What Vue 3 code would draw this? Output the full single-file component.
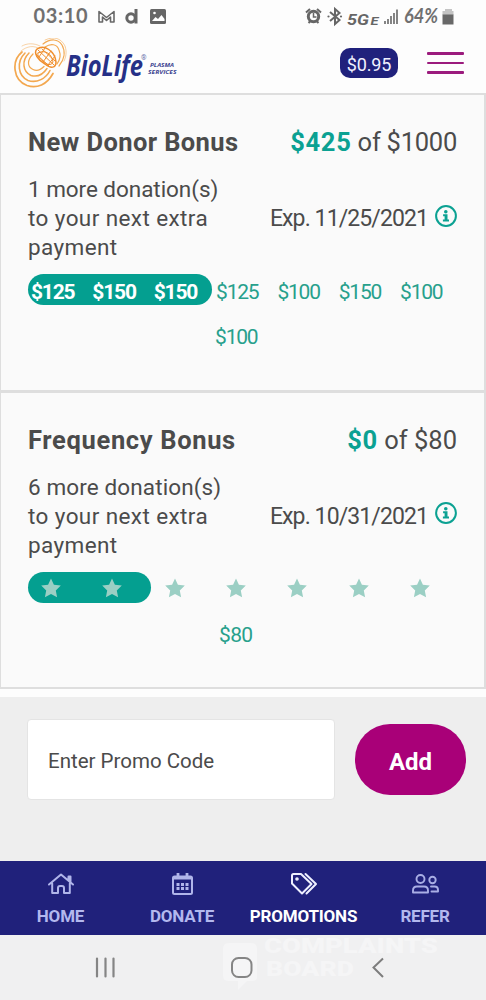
<script setup>
const bonuses = [
  {
    title: 'New Donor Bonus', cls: 'donor', earned: '$425', total: ' of $1000',
    lines: ['1 more donation(s)', 'to your next extra', 'payment'],
    exp: 'Exp. 11/25/2021', done: 3,
    steps: ['$125', '$150', '$150', '$125', '$100', '$150', '$100', '$100'],
  },
  {
    title: 'Frequency Bonus', cls: 'freq', earned: '$0', total: ' of $80',
    lines: ['6 more donation(s)', 'to your next extra', 'payment'],
    exp: 'Exp. 10/31/2021', done: 2,
    steps: ['', '', '', '', '', '', '', '$80'],
  },
]
</script>

<template>
  <div class="screen">
    <div class="status">
      <svg width="486" height="32" viewBox="0 0 486 32">
        <text class="clock" x="33.500" y="23" font-size="20" textLength="54">03:10</text>
        <text class="percent" x="404" y="23" font-size="20" textLength="34" lengthAdjust="spacingAndGlyphs">64%</text>
        <path d="M99 22V11.500l7.500 6 7.500-6V22h-3.500v-5l-4 3.500-4-3.500v5z" fill="none" stroke="#686868" stroke-width="1.600" stroke-linejoin="round" />
        <g fill="none" stroke="#666" stroke-width="3"><circle cx="131" cy="18" r="4.200" /><path d="M136 9v14.500" /></g>
        <rect x="150" y="9" width="16" height="15" rx="1.500" fill="#666" />
        <path d="M152 21l3.500-4 2.500 2 3.500-4 3 4v2z" fill="#fff" /><circle cx="154.500" cy="13" r="1.300" fill="#fff" />
        <g fill="none" stroke="#666">
          <circle cx="313.500" cy="16.500" r="5.200" stroke-width="3" />
          <path d="M306 12.500l4-3.500M321 12.500l-4-3.500M308.500 23l2-2M318.500 23l-2-2" stroke-width="2" />
          <path d="M313.500 13v4h3" stroke-width="1.500" />
          <path d="M330 12l9.500 8-4.500 4V9l4.500 4-9.500 8" stroke-width="2" />
        </g>
        <circle cx="328.500" cy="16.500" r="1.100" fill="#666" /><circle cx="341" cy="16.500" r="1.100" fill="#666" />
        <text class="net" x="347" y="25" font-size="15.500" textLength="22" lengthAdjust="spacingAndGlyphs">5G</text>
        <text class="net" x="370.500" y="25" font-size="10" textLength="8" lengthAdjust="spacingAndGlyphs">E</text>
        <path d="M385 24v-3M388 24v-5M391 24v-8M394 24V13M397 24V9.500" stroke="#707070" stroke-width="1.700" />
        <path d="M445 9h7v2h1.500v4h-11v-4h2.500z" fill="#c4c4c4" /><path d="M442.500 14.500h11v10h-11z" fill="#686868" />
      </svg>
    </div>

    <header class="header">
      <svg class="logo" width="165" height="52" viewBox="0 0 165 52">
        <g fill="none" stroke="#f3a850" stroke-linecap="round">
          <path d="M8 14C-3 23-1 42 13 47.500c10 3.500 20-1 26-12" stroke-width="1.700" />
          <path d="M11 15C2 24 4 38 14 42.500c9 3 18-2 22-10" stroke-width="1.600" />
          <path d="M15 15C7 23 9 34 17 37.500c7 2 12-1 16-7" stroke-width="1.500" />
          <path d="M19 16c-6 6-6 13 0 15.500 4 2 8 0 11-3" stroke-width="1.200" />
          <path d="M8 8c5-3 12-3 18 0M7 13c6-5 13-6 19-2" stroke-width="1" opacity=".5" />
          <path d="M29 6c8-6 15-5 19 1 4 7 2 15-3 21" stroke-width="1.200" />
          <path d="M31 9c6-4 12-3 14 3 2 5 1 10-2 14" stroke-width="1.200" />
          <path d="M31 2c9-4 16-2 20 6 2 6 1 11-1 15" stroke-width=".8" opacity=".7" />
          <path d="M23 11c7-5 18 2 19 13 0 6-5 7-11 2-7-4-12-11-8-15z" stroke-width="1.500" stroke="#f08f2e" />
          <path d="M24 15c7-4 14 1 15 9-2 4-6 3-10-1-4-3-6-6-5-8zM24 12l16 15M31 10l-6 9M37 13l-8 11M41 18l-7 9M28 11l13 12M22 16l13 12" stroke-width="1" stroke="#f08f2e" />
        </g>
        <text x="52" y="38" class="brand" font-size="28.500" textLength="77" lengthAdjust="spacingAndGlyphs">BioLife</text>
        <text x="127" y="22" class="reg" font-size="7">®</text>
        <text x="136" y="29.200" class="sub" font-size="6" textLength="24" lengthAdjust="spacingAndGlyphs">PLASMA</text>
        <text x="134" y="35.500" class="sub" font-size="6" textLength="28.500" lengthAdjust="spacingAndGlyphs">SERVICES</text>
      </svg>
      <div class="balance">$0.95</div>
      <div class="menu"><i></i><i></i><i></i></div>
    </header>

    <section v-for="b in bonuses" :key="b.title" class="card" :class="b.cls">
      <div class="row top">
        <h2>{{ b.title }}</h2>
        <div class="amount"><b>{{ b.earned }}</b>{{ b.total }}</div>
      </div>
      <div class="row detail">
        <p><span v-for="l in b.lines" :key="l">{{ l }}</span></p>
        <div class="exp">
          <span>{{ b.exp }}</span>
          <svg width="22" height="22" viewBox="0 0 22 22">
            <circle cx="11" cy="11" r="9.900" fill="none" stroke="#0ba192" stroke-width="2" />
            <circle cx="10.800" cy="6.800" r="1.800" fill="#0ba192" />
            <path d="M8.100 9.300h4.400v5.200h1.500v1.900H7.900v-1.900h1.700v-3.300H8.100z" fill="#0ba192" />
          </svg>
        </div>
      </div>
      <div class="steps">
        <div class="bar" :class="'n' + b.done"></div>
        <div v-for="(s, i) in b.steps" :key="i" class="step" :class="{ done: i < b.done, last: i === 7 }">
          <span v-if="s">{{ s }}</span>
          <svg v-else width="20" height="20" viewBox="0 0 20 20">
            <path d="M10 .500l2.900 6.200 6.900.900-5 4.800 1.300 6.900-6.100-3.300-6.100 3.300 1.300-6.900-5-4.800 6.900-.900z" />
          </svg>
        </div>
      </div>
    </section>

    <section class="promo">
      <div class="field">Enter Promo Code</div>
      <button class="add">Add</button>
    </section>

    <nav class="nav">
      <div class="tab home">
        <svg width="28" height="24" viewBox="0 0 28 24" fill="none" stroke="#b0b5ea" stroke-width="2" stroke-linejoin="round" stroke-linecap="round">
          <path d="M2 12.500L14 2.500l12 10M21.500 8V4.500h2V10M5.200 11.500V21h5.800v-5q0-2 2-2h2q2 0 2 2v5h5.800v-9.500" />
        </svg>
        <span>HOME</span>
      </div>
      <div class="tab donate">
        <svg width="28" height="24" viewBox="0 0 28 24" fill="none" stroke="#b0b5ea" stroke-width="2">
          <rect x="5" y="4.500" width="19" height="17.500" rx="1.500" />
          <path d="M5 6h19M10 1v4M19 1v4" stroke-width="2.800" />
          <path d="M8.500 12.500h3m1.500 0h3m1.500 0h3M8.500 16.500h3m1.500 0h3m1.500 0h3" stroke-width="3" />
        </svg>
        <span>DONATE</span>
      </div>
      <div class="tab promotions">
        <svg width="28" height="24" viewBox="0 0 28 24" fill="none" stroke="#eef0ff" stroke-width="2" stroke-linejoin="round" stroke-linecap="round">
          <path d="M2 3.500Q2 2 3.500 2h7.500L21.500 12 12 21.500 2 11.500zM15.500 2L26 12l-9.500 9.500" /><circle cx="7" cy="7" r="1.100" fill="#eef0ff" stroke-width="1.400" />
        </svg>
        <span>PROMOTIONS</span>
      </div>
      <div class="tab refer">
        <svg width="28" height="24" viewBox="0 0 28 24" fill="none" stroke="#a9aee5" stroke-width="1.900" stroke-linejoin="round" stroke-linecap="round">
          <circle cx="9.500" cy="7" r="4" /><circle cx="21.500" cy="8" r="3.200" />
          <path d="M2 20.500v-2q0-4 4-4h7q4 0 4 4v2H2zM20 14.500h3.500q3.500 0 3.500 3.300v1.700h-6.500" />
        </svg>
        <span>REFER</span>
      </div>
    </nav>

    <div class="system">
      <svg width="486" height="65" viewBox="0 0 486 65">
        <g class="mark">
          <path d="M229 8h22q6 0 6 6v28q0 4-5 4h-5l-9 9v-9h-9q-6 0-6-5V14q0-6 6-6z" />
          <text x="264" y="18" font-size="20" textLength="174" lengthAdjust="spacingAndGlyphs">COMPLAINTS</text>
          <text x="266" y="41" font-size="20" textLength="88" lengthAdjust="spacingAndGlyphs">BOARD</text>
        </g>
        <path d="M97 23.500v18M105.500 23.500v18M113.500 23.500v18" stroke="#858585" stroke-width="2.200" stroke-linecap="round" />
        <rect x="232" y="23" width="19.500" height="19" rx="6.500" fill="none" stroke="#858585" stroke-width="2" />
        <path d="M383 23.500L373.500 32.500l9.500 9.500" fill="none" stroke="#7d7d7d" stroke-width="2" />
      </svg>
    </div>
  </div>
</template>

<style>
body { margin: 0; background: #fff; }
</style>

<style scoped>
* { box-sizing: border-box; }
.screen { width: 486px; height: 1000px; display: flex; flex-direction: column; overflow: hidden; background: #fdfdfd; font-family: Roboto, "Liberation Sans", sans-serif; color: #4b4b4b; white-space: nowrap; }
svg { display: block; flex: none; }
.status { height: 32px; flex: none; }
.clock { font-family: Lato, sans-serif; font-weight: 700; fill: #707070; }
.percent { font-family: Lato, sans-serif; font-style: italic; font-weight: 700; fill: #707070; }
.net { font-weight: 700; font-style: italic; fill: #666; }
.header { height: 61px; flex: none; display: flex; align-items: flex-start; padding: 6px 22px 0 14px; }
.brand { font-family: "Open Sans", sans-serif; font-style: italic; font-weight: 700; fill: #263087; }
.reg { fill: #6971ab; }
.sub { font-family: "Open Sans", sans-serif; font-style: italic; font-weight: 700; fill: #3d4692; }
.balance { margin: 10px 0 0 161px; width: 58px; height: 30px; border-radius: 10px; background: #20217c; color: #f1f1ff; font-size: 18px; font-weight: 400; line-height: 33px; letter-spacing: -.1px; text-align: center; }
.menu { margin: 14px 0 0 auto; width: 37px; display: grid; gap: 7px; }
.menu i { height: 2.500px; border-radius: 1px; background: #9b1b7d; }
.card { flex: none; height: 298px; border: 1px solid #dedede; border-width: 2px 1px 1px; border-right-width: 2px; background: #fafafa; padding: 31px 27px 0 27px; }
.freq { height: 299px; border-top-width: 3px; border-bottom-width: 2px; padding-top: 31px; margin-top: -1px; }
.row { display: flex; justify-content: space-between; }
.top { height: 48px; line-height: 32px; }
.donor .top { height: 49px; }
h2 { margin: 0; font-size: 25.500px; font-weight: 700; letter-spacing: .4px; }
.freq h2 { letter-spacing: .65px; }
.amount { font-size: 25.500px; letter-spacing: -.25px; white-space: pre; }
.freq .amount { letter-spacing: 0; }
.amount b { color: #0ba192; letter-spacing: .7px; }
.detail { height: 99px; }
.freq .detail { height: 100px; padding-top: 1px; }
p { margin: 0; font-size: 22.500px; line-height: 29px; letter-spacing: .4px; }
p span { display: block; }
p span:first-child { letter-spacing: -.05px; }
.freq p span:first-child { letter-spacing: .12px; }
.exp { display: flex; gap: 7px; align-items: center; height: 29px; margin-top: 29px; font-size: 23px; letter-spacing: -.9px; }
.exp svg { margin-top: -5px; }
.freq .exp svg { margin-top: -7px; }
.steps { display: grid; grid-template-columns: repeat(7, 61.350px); grid-template-rows: 31px 31px; row-gap: 14px; position: relative; height: 76px; }
.bar { position: absolute; left: 0; top: 0; height: 31px; border-radius: 16px; background: #049f90; }
.n3 { width: 184px; }
.n2 { width: 123px; }
.step { position: relative; display: flex; align-items: center; font-size: 21px; letter-spacing: -1.200px; color: #27a08c; line-height: 33px; padding: 5px 0 0 4px; }
.step svg { margin: -4px 0 0 10px; fill: #9bcfc4; }
.step.done { color: #fff; font-weight: 700; padding-left: 3px; }
.step.last { grid-column: 4; padding: 5px 0 0 3px; }
.freq .step.last { padding-left: 7px; letter-spacing: -.7px; }
.promo { margin-top: 8px; height: 164px; flex: none; background: #eee; display: flex; padding: 22px 20px 0 27px; justify-content: space-between; }
.field { width: 308px; height: 81px; border: 1px solid #e4e4e4; border-radius: 4px; background: #fff; line-height: 82px; padding-left: 20px; font-size: 20.500px; letter-spacing: 0; }
.add { border: 0; padding: 4px 0 0; width: 111px; height: 71px; border-radius: 35px; margin-top: 5px; background: #a90078; color: #fff; font: 700 24px Roboto, sans-serif; }
.nav { height: 74px; flex: none; background: #20217b; display: grid; grid-template-columns: 121px 122px 121px 122px; }
.tab { display: flex; flex-direction: column; align-items: center; padding-top: 11px; color: #b3b8ee; font-size: 17px; font-weight: 700; line-height: 22px; letter-spacing: -.2px; gap: 9px; }
.promotions { color: #fff; }
.system { height: 65px; flex: none; background: #f0f0f1; }
.mark { fill: #f5f5f6; font-weight: 900; }
</style>
